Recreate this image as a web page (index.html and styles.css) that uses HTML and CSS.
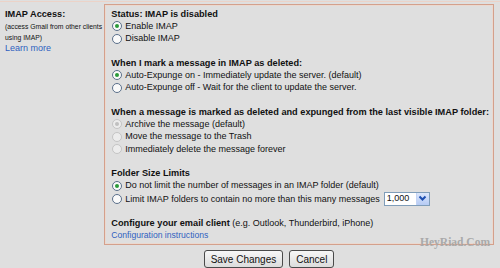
FILE: index.html
```html
<!DOCTYPE html>
<html lang="en">
<head>
  <meta charset="UTF-8">
  <title>IMAP Access</title>
  <link rel="stylesheet" href="styles.css">
</head>
<body>
<div class="topline"></div>
<div class="settings">
  <div class="label">
    <b>IMAP Access:</b>
    <div class="hint">(access Gmail from other clients<br>using IMAP)</div>
    <a href="#" class="link">Learn more</a>
  </div>
  <div class="box">
    <div class="section">
      <b>Status: IMAP is disabled</b>
      <div class="opt"><span class="radio on"></span>Enable IMAP</div>
      <div class="opt"><span class="radio"></span>Disable IMAP</div>
    </div>
    <div class="section">
      <b>When I mark a message in IMAP as deleted:</b>
      <div class="opt"><span class="radio on"></span>Auto-Expunge on - Immediately update the server. (default)</div>
      <div class="opt"><span class="radio"></span>Auto-Expunge off - Wait for the client to update the server.</div>
    </div>
    <div class="section">
      <b>When a message is marked as deleted and expunged from the last visible IMAP folder:</b>
      <div class="opt dim"><span class="radio on"></span>Archive the message (default)</div>
      <div class="opt dim"><span class="radio"></span>Move the message to the Trash</div>
      <div class="opt dim"><span class="radio"></span>Immediately delete the message forever</div>
    </div>
    <div class="section">
      <b>Folder Size Limits</b>
      <div class="opt"><span class="radio on"></span>Do not limit the number of messages in an IMAP folder (default)</div>
      <div class="opt"><span class="radio"></span>Limit IMAP folders to contain no more than this many messages
        <span class="select">1,000<span class="arrow"><svg width="9" height="7" viewBox="0 0 9 7"><path d="M1.5 1.5 L4.5 4.5 L7.5 1.5" fill="none" stroke="#1d4fb0" stroke-width="2"/></svg></span></span>
      </div>
    </div>
    <div class="section last">
      <b>Configure your email client</b> (e.g. Outlook, Thunderbird, iPhone)
      <div><a href="#" class="link small">Configuration instructions</a></div>
    </div>
    <div class="watermark">HeyRiad.Com</div>
  </div>
</div>
<div class="actions">
  <button>Save Changes</button>
  <button>Cancel</button>
</div>
</body>
</html>
```
FILE: styles.css
```css
body {
  margin: 0;
  background-color: #dfdfdf;
  font-family: "Liberation Sans", Arial, sans-serif;
  font-size: 9px;
  line-height: 12.2px;
  color: #111;
}

b {
  font-size: 9.2px;
  white-space: nowrap;
}

.topline {
  height: 1px;
  margin-top: 1px;
  background-color: #ecd3c8;
}

.settings {
  display: flex;
  padding-top: 2px;
}

.label {
  width: 100px;
  padding: 5px 0 0 5px;
  line-height: 11px;
}

.hint {
  font-size: 6.8px;
  margin-top: 1px;
}

.link {
  color: #2f5fc0;
  text-decoration: none;
}

.label .link {
  font-size: 9px;
}

.link.small {
  font-size: 8.6px;
}

.box {
  position: relative;
  flex: 1;
  margin-right: 6px;
  border: 1px solid #d4a08c;
  box-shadow: inset 0 0 0 1px #ead9d0;
  padding: 3px 4px 3px 6px;
}

.section {
  margin-bottom: 12.4px;
}

.section.last {
  margin-bottom: 0;
  line-height: 11.5px;
}

.opt {
  display: flex;
  align-items: center;
}

.radio {
  width: 8px;
  height: 8px;
  border: 1px solid #5a6f8a;
  border-radius: 50%;
  background-color: #fafafa;
  margin: 0 3px 0 1px;
  position: relative;
  flex-shrink: 0;
}

.radio.on::after {
  content: "";
  position: absolute;
  left: 2px;
  top: 2px;
  width: 4px;
  height: 4px;
  border-radius: 50%;
  background-color: #2a9a3a;
}

.dim .radio {
  border-color: #c4c4c4;
  background-color: #ececec;
}

.dim .radio.on::after {
  background-color: #c0c0c0;
}

.select {
  display: inline-flex;
  align-items: center;
  justify-content: space-between;
  margin-left: 4px;
  width: 46px;
  height: 14px;
  border: 1px solid #7f9db9;
  background-color: #fff;
  padding-left: 2px;
  box-sizing: border-box;
  line-height: 11px;
}

.arrow {
  width: 12px;
  height: 12px;
  background: linear-gradient(#dbe6fb, #b6cbf4);
  border-left: 1px solid #c3d3f5;
  display: flex;
  align-items: center;
  justify-content: center;
}

.watermark {
  position: absolute;
  right: 3px;
  bottom: -4px;
  font-family: "Liberation Serif", serif;
  font-weight: bold;
  font-size: 11.5px;
  color: #a9a9a9;
}

.actions {
  display: flex;
  justify-content: center;
  gap: 6px;
  padding: 5px 0 0 38px;
}

button {
  font-family: "Liberation Sans", Arial, sans-serif;
  font-size: 10px;
  height: 18px;
  padding: 0 6px;
  border: 1px solid #4a4a4a;
  border-radius: 3px;
  background: linear-gradient(#f7f7f7, #dcdcdc);
  color: #111;
}
```
